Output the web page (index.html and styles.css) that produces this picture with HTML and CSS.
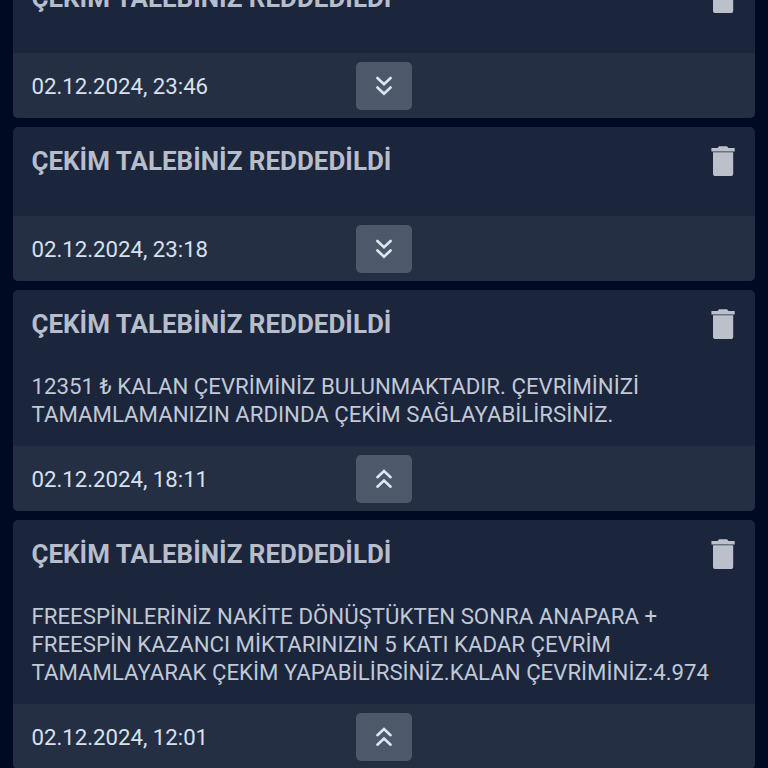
FILE: index.html
```
<!DOCTYPE html>
<html lang="tr"><head><meta charset="utf-8"><title>Mesajlar</title><link rel="stylesheet" href="styles.css"></head>
<body>
<svg class="defs"><symbol id="trash" viewBox="0 0 24 30"><path d="M2 6.2H22.2V27.4Q22.2 30 19.6 30H4.6Q2 30 2 27.4ZM.4 2H6.5L8 .3H16L17.5 2H23.7V5.4H.4Z"/></symbol>
<symbol id="down" viewBox="0 0 18 20"><path d="M2.4 2L9 8.2L15.6 2M2.4 11.5L9 17.7L15.6 11.5"/></symbol>
<symbol id="up" viewBox="0 0 18 20"><path d="M2.4 8.2L9 2L15.6 8.2M2.4 17.7L9 11.5L15.6 17.7"/></symbol></svg>
<main class="list">
<article class="card"><div class="head"><h2>ÇEKİM TALEBİNİZ REDDEDİLDİ</h2><svg class="trash"><use href="#trash"/></svg></div><footer><time>02.12.2024, 23:46</time><button><svg><use href="#down"/></svg></button></footer></article>
<article class="card"><div class="head"><h2>ÇEKİM TALEBİNİZ REDDEDİLDİ</h2><svg class="trash"><use href="#trash"/></svg></div><footer><time>02.12.2024, 23:18</time><button><svg><use href="#down"/></svg></button></footer></article>
<article class="card"><div class="head"><h2>ÇEKİM TALEBİNİZ REDDEDİLDİ</h2><svg class="trash"><use href="#trash"/></svg></div><p>12351 ₺ KALAN ÇEVRİMİNİZ BULUNMAKTADIR. ÇEVRİMİNİZİ<br>TAMAMLAMANIZIN ARDINDA ÇEKİM SAĞLAYABİLİRSİNİZ.</p><footer><time>02.12.2024, 18:11</time><button><svg><use href="#up"/></svg></button></footer></article>
<article class="card"><div class="head"><h2>ÇEKİM TALEBİNİZ REDDEDİLDİ</h2><svg class="trash"><use href="#trash"/></svg></div><p>FREESPİNLERİNİZ NAKİTE DÖNÜŞTÜKTEN SONRA ANAPARA +<br>FREESPİN KAZANCI MİKTARINIZIN 5 KATI KADAR ÇEVRİM<br>TAMAMLAYARAK ÇEKİM YAPABİLİRSİNİZ.KALAN ÇEVRİMİNİZ:4.974</p><footer><time>02.12.2024, 12:01</time><button><svg><use href="#up"/></svg></button></footer></article>
</main></body></html>
```
FILE: styles.css
```
* { box-sizing: border-box; }
html, body { margin: 0; height: 768px; overflow: hidden; background: #000a23; }
body { font-family: Roboto, sans-serif; }
.defs { position: absolute; width: 0; height: 0; }
.list { display: flex; flex-direction: column; gap: 9px; margin: -36px 13px 0; }
.card { flex: none; background: #1b253c; border-radius: 5px; overflow: hidden; }
.head { display: flex; justify-content: space-between; height: 89px; padding: 19px 20px 0 18.5px; }
h2 { margin: 0; font-size: 25.97px; line-height: 30px; font-weight: 700; color: #b6bdcb; white-space: nowrap; }
.trash { width: 24px; height: 30px; fill: #bbc0ca; }
p { margin: -7px 18.5px 0; padding-bottom: 18px; font-size: 22.22px; line-height: 28px; color: #c1c8d6; white-space: nowrap; }
footer { display: grid; grid-template-columns: 1fr 56px 1fr; align-items: center; height: 65px; padding: 0 18.5px; background: #242f43; }
time { font-size: 22.2px; color: #d9e0ee; white-space: nowrap; }
button { width: 56px; height: 48px; padding: 0; border: 0; border-radius: 5px; background: #4e586b; display: grid; place-items: center; }
button svg { width: 18px; height: 20px; fill: none; stroke: #dfe6f1; stroke-width: 2.6; stroke-linecap: round; }
```
